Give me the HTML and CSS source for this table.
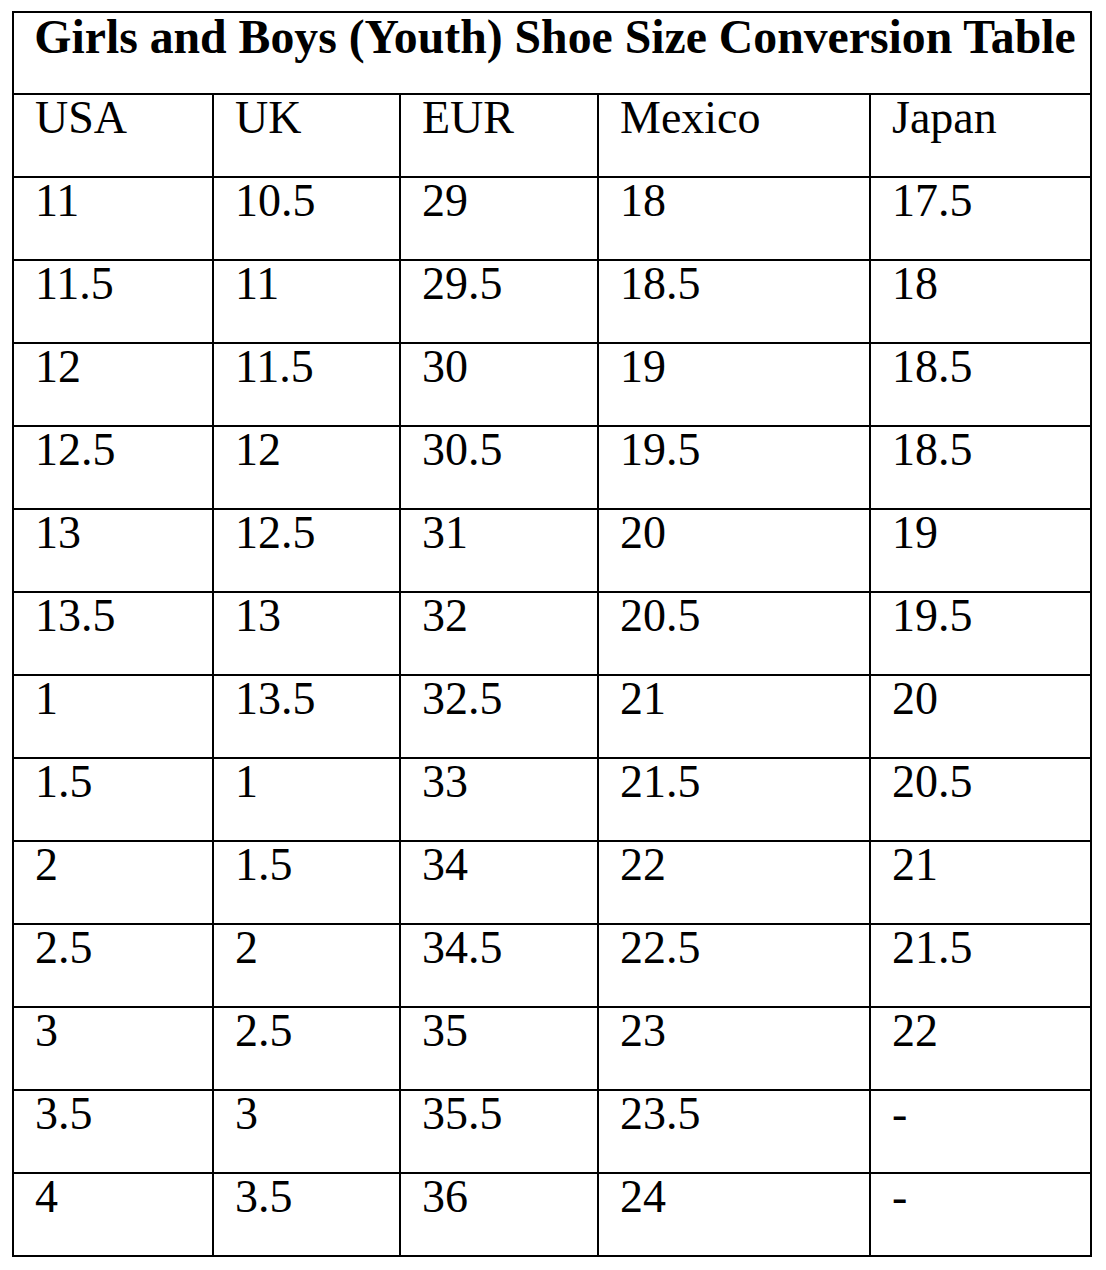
FILE: index.html
```html
<!DOCTYPE html>
<html>
<head>
<meta charset="utf-8">
<title>Girls and Boys (Youth) Shoe Size Conversion Table</title>
<link rel="stylesheet" href="styles.css">
</head>
<body>
<div class="table">
  <div class="cell title">Girls and Boys (Youth) Shoe Size Conversion Table</div>
  <div class="cell">USA</div><div class="cell">UK</div><div class="cell">EUR</div><div class="cell">Mexico</div><div class="cell">Japan</div>
  <div class="cell">11</div><div class="cell">10.5</div><div class="cell">29</div><div class="cell">18</div><div class="cell">17.5</div>
  <div class="cell">11.5</div><div class="cell">11</div><div class="cell">29.5</div><div class="cell">18.5</div><div class="cell">18</div>
  <div class="cell">12</div><div class="cell">11.5</div><div class="cell">30</div><div class="cell">19</div><div class="cell">18.5</div>
  <div class="cell">12.5</div><div class="cell">12</div><div class="cell">30.5</div><div class="cell">19.5</div><div class="cell">18.5</div>
  <div class="cell">13</div><div class="cell">12.5</div><div class="cell">31</div><div class="cell">20</div><div class="cell">19</div>
  <div class="cell">13.5</div><div class="cell">13</div><div class="cell">32</div><div class="cell">20.5</div><div class="cell">19.5</div>
  <div class="cell">1</div><div class="cell">13.5</div><div class="cell">32.5</div><div class="cell">21</div><div class="cell">20</div>
  <div class="cell">1.5</div><div class="cell">1</div><div class="cell">33</div><div class="cell">21.5</div><div class="cell">20.5</div>
  <div class="cell">2</div><div class="cell">1.5</div><div class="cell">34</div><div class="cell">22</div><div class="cell">21</div>
  <div class="cell">2.5</div><div class="cell">2</div><div class="cell">34.5</div><div class="cell">22.5</div><div class="cell">21.5</div>
  <div class="cell">3</div><div class="cell">2.5</div><div class="cell">35</div><div class="cell">23</div><div class="cell">22</div>
  <div class="cell">3.5</div><div class="cell">3</div><div class="cell">35.5</div><div class="cell">23.5</div><div class="cell">-</div>
  <div class="cell">4</div><div class="cell">3.5</div><div class="cell">36</div><div class="cell">24</div><div class="cell">-</div>
</div>
</body>
</html>
```
FILE: styles.css
```css
html, body {
  margin: 0;
  padding: 0;
  background: #ffffff;
}
body {
  font-family: "Liberation Serif", "Times New Roman", serif;
  color: #000000;
}
.table {
  display: grid;
  grid-template-columns: 200px 187px 198px 272px 221px;
  grid-template-rows: 82px;
  grid-auto-rows: 83px;
  width: max-content;
  margin: 11px 0 0 12px;
  border-left: 2px solid #000;
  border-top: 2px solid #000;
}
.cell {
  box-sizing: border-box;
  border-right: 2px solid #000;
  border-bottom: 2px solid #000;
  padding-left: 21px;
  font-size: 46px;
  line-height: 46px;
  white-space: nowrap;
}
.title {
  grid-column: 1 / -1;
  padding-left: 6px;
  text-align: center;
  font-weight: bold;
  font-size: 47.75px;
  line-height: 47px;
}
```
